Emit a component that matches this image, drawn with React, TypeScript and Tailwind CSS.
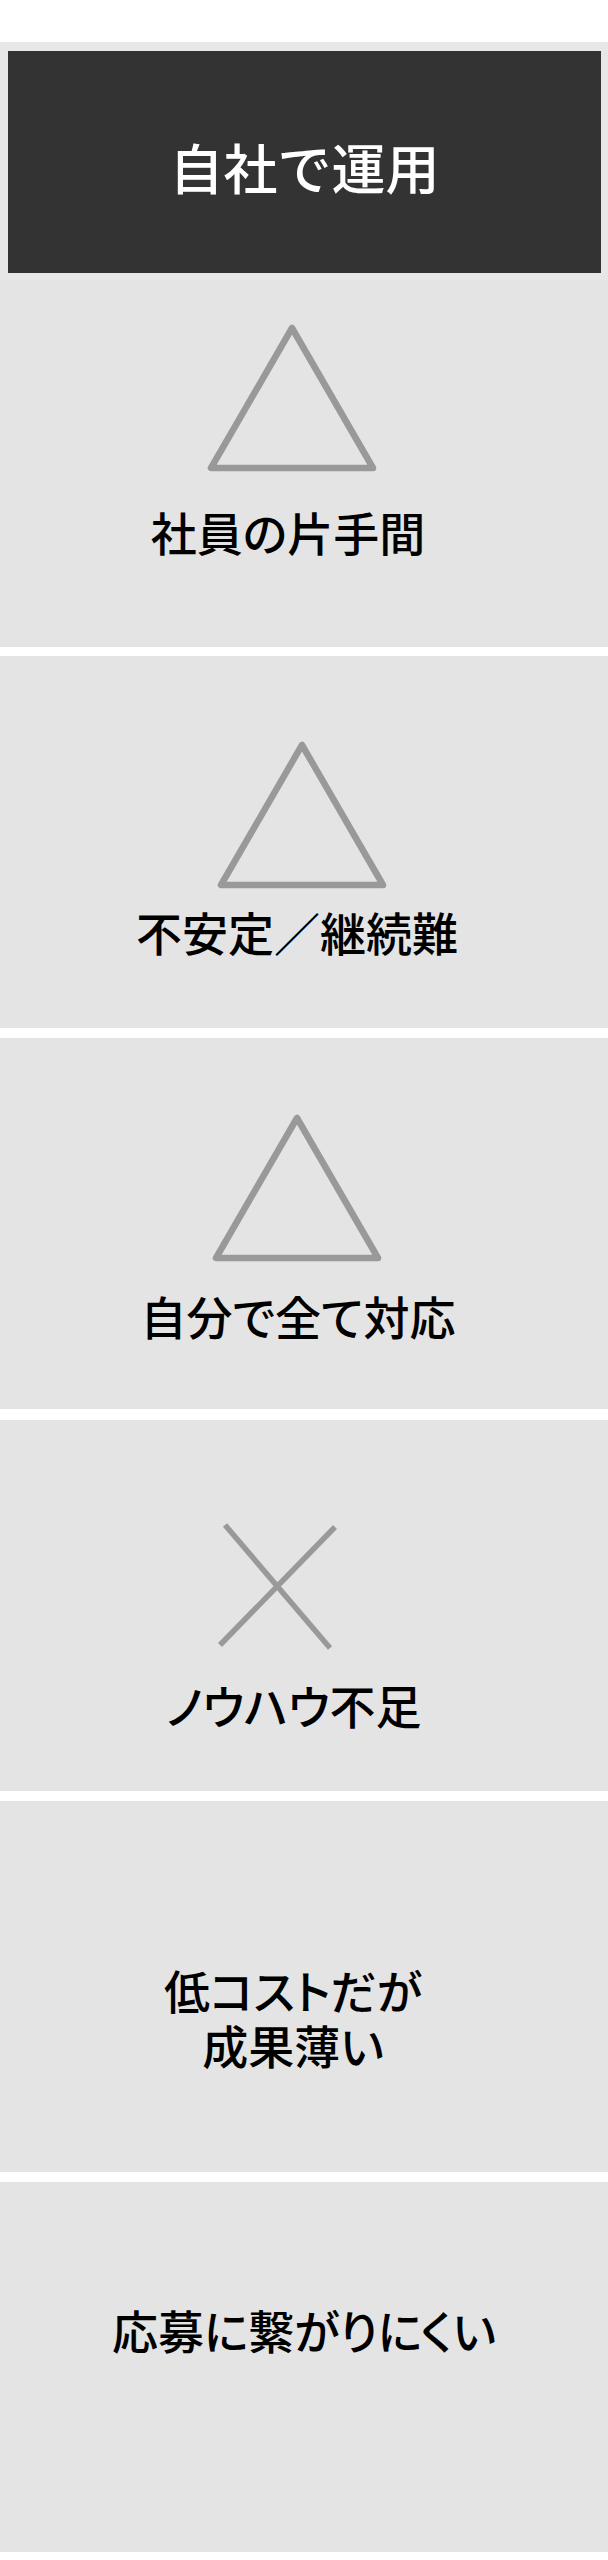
import React from "react";

const font = { fontFamily: '"Noto Sans CJK JP", "Noto Sans", sans-serif' };

function Triangle({ cls }: { cls: string }) {
  return (
    <svg width="176" height="152" viewBox="0 0 176 152" className={cls}>
      <polygon
        points="88,5 7,145 169,145"
        fill="none"
        stroke="#999999"
        strokeWidth="6.5"
        strokeLinejoin="round"
      />
    </svg>
  );
}

function Cross({ cls }: { cls: string }) {
  return (
    <svg width="122" height="130" viewBox="0 0 122 130" className={cls}>
      <line x1="8" y1="4" x2="113" y2="127" stroke="#999999" strokeWidth="5.5" />
      <line x1="118" y1="6" x2="3" y2="124" stroke="#999999" strokeWidth="5.5" />
    </svg>
  );
}

const txt = "text-[46px] leading-[55px] font-medium [font-feature-settings:'palt']";

export default function App() {
  return (
    <div className="w-[608px] bg-white pt-[42px] pb-[8px]" style={font}>
      {/* header */}
      <div className="bg-[#e7e7e7] pt-[9px] pl-[8px] pr-[7px] pb-[7px]">
        <div className="h-[222px] bg-[#333333] pt-[86px] text-center text-[54px] leading-[60px] font-medium text-white">
          自社で運用
        </div>
      </div>

      {/* card 1 */}
      <div className="h-[367px] bg-[#e4e4e4] flex flex-col items-center pt-[43px] text-black">
        <Triangle cls="mr-[24px]" />
        <div className={`mt-[29px] mr-[32px] ${txt}`}>社員の片手間</div>
      </div>

      {/* card 2 */}
      <div className="mt-[9px] h-[372px] bg-[#e4e4e4] flex flex-col items-center pt-[84px] text-black">
        <Triangle cls="mr-[4px]" />
        <div className={`mt-[12px] mr-[14px] ${txt}`}>不安定／継続難</div>
      </div>

      {/* card 3 */}
      <div className="mt-[10px] h-[371px] bg-[#e4e4e4] flex flex-col items-center pt-[75px] text-black">
        <Triangle cls="mr-[14px]" />
        <div className={`mt-[23px] mr-[12px] ${txt}`}>自分で全て対応</div>
      </div>

      {/* card 4 */}
      <div className="mt-[11px] h-[371px] bg-[#e4e4e4] flex flex-col items-center pt-[101px] text-black">
        <Cross cls="mr-[52px]" />
        <div className={`mt-[26px] mr-[20px] ${txt}`}>ノウハウ不足</div>
      </div>

      {/* card 5 */}
      <div className="mt-[10px] h-[371px] bg-[#e4e4e4] flex flex-col items-center pt-[161px] text-black">
        <div className={`mr-[22px] ${txt}`}>低コストだが</div>
        <div className={`mr-[22px] ${txt}`}>成果薄い</div>
      </div>

      {/* card 6 */}
      <div className="mt-[10px] h-[370px] bg-[#e4e4e4] flex flex-col items-center pt-[120px] text-black">
        <div className={txt}>応募に繋がりにくい</div>
      </div>
    </div>
  );
}
